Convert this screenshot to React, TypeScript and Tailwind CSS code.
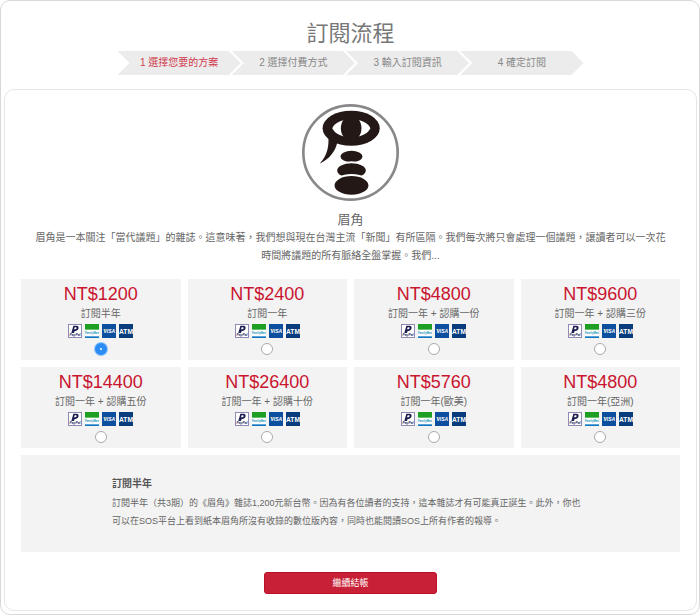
import { useState } from "react";

const FONT = "font-['Liberation_Sans','Noto_Sans_CJK_TC',sans-serif]";

const STEPS = ["1 選擇您要的方案", "2 選擇付費方式", "3 輸入訂閱資訊", "4 確定訂閱"];

const PLANS = [
  { price: "NT$1200", name: "訂閱半年" },
  { price: "NT$2400", name: "訂閱一年" },
  { price: "NT$4800", name: "訂閱一年 + 認購一份" },
  { price: "NT$9600", name: "訂閱一年 + 認購三份" },
  { price: "NT$14400", name: "訂閱一年 + 認購五份" },
  { price: "NT$26400", name: "訂閱一年 + 認購十份" },
  { price: "NT$5760", name: "訂閱一年(歐美)" },
  { price: "NT$4800", name: "訂閱一年(亞洲)" },
];

function Logo() {
  return (
    <svg className="mx-auto size-[97px]" viewBox="36 25 292 292" aria-hidden="true">
      <circle cx="182" cy="171" r="142" fill="#fff" stroke="#888" strokeWidth="8" />
      <g fill="#231815">
        <ellipse cx="184" cy="98" rx="86" ry="53" />
        <path d="M115 120C118 150 113 180 89 205C120 190 136 168 142 142Z" />
        <ellipse cx="185" cy="183" rx="33" ry="17" />
        <ellipse cx="185" cy="225" rx="46" ry="25" stroke="#fff" strokeWidth="6" />
        <ellipse cx="185" cy="270" rx="54" ry="31" stroke="#fff" strokeWidth="6" />
      </g>
      <path d="M127 98C143 62 226 62 242 98C226 134 143 134 127 98Z" fill="#fff" />
      <ellipse cx="184" cy="98" rx="31" ry="38" fill="#231815" />
    </svg>
  );
}

function PaymentIcons() {
  return (
    <span className="mt-px flex gap-[3px]">
      <svg className="size-3.5" viewBox="0 0 42 42" aria-hidden="true">
        <rect x="1.5" y="1.5" width="39" height="39" fill="#fff" stroke="#8f89b5" strokeWidth="3" />
        <path d="M16 5H25C32 5 33 10 31 15C29 20 25 21 20 21L18 27H10Z" fill="#1d1d50" />
        <path d="M20 10H24C27 10 26 16 22 16H18Z" fill="#fff" />
        <text x="21" y="37" textAnchor="middle" fontSize="10" fontWeight="700" fontStyle="italic" fill="#25225c">PayPal</text>
      </svg>
      <svg className="size-3.5" viewBox="0 0 42 42" aria-hidden="true">
        <rect width="42" height="42" fill="#fff" />
        <rect width="42" height="17" fill="#1c9f22" />
        <text x="21" y="31" textAnchor="middle" fontSize="8" fontWeight="700" fill="#1594b8">FamilyMart</text>
        <rect y="37" width="42" height="5" fill="#1177c2" />
      </svg>
      <svg className="size-3.5" viewBox="0 0 42 42" aria-hidden="true">
        <rect width="42" height="42" fill="#0b4f9e" />
        <path d="M3 15H10L11 21Z" fill="#f5a936" />
        <text x="22" y="27" textAnchor="middle" fontSize="15" fontWeight="700" fontStyle="italic" fill="#fff">VISA</text>
      </svg>
      <svg className="size-3.5" viewBox="0 0 42 42" aria-hidden="true">
        <rect width="42" height="42" fill="#083c7c" />
        <text x="21" y="29" textAnchor="middle" fontSize="20" fontWeight="700" fill="#fff">ATM</text>
      </svg>
    </span>
  );
}

export default function App() {
  const [selected, setSelected] = useState(0);
  return (
    <div lang="zh-Hant" className={`${FONT} rounded-[10px] border border-[#d9d9d9] bg-white pt-4 pr-0.5 pb-[3px] pl-[3px] text-center text-[10px] leading-[18px] text-[#666]`}>
      <h1 className="text-[22px] leading-[34px] font-normal text-[#777]">訂閱流程</h1>
      <ol className="mx-auto flex w-[466px] max-w-full">
        {STEPS.map((step, i) => (
          <li
            key={step}
            aria-current={i === 0 ? "step" : undefined}
            className={`-ml-[9px] flex-auto basis-[123px] bg-[#ececec] leading-6 first:ml-0 [clip-path:polygon(0_0,calc(100%-12px)_0,100%_50%,calc(100%-12px)_100%,0_100%,12px_50%)] ${i === 0 ? "text-[#d0394b]" : "text-[#888]"}`}
          >
            {step}
          </li>
        ))}
      </ol>

      <main className="mt-3.5 rounded-[10px] border border-[#e6e6e6] px-4 pt-3.5 pb-4">
        <Logo />
        <h2 className="mt-2.5 text-[13px] leading-[18px]">眉角</h2>
        <p>
          眉角是一本關注「當代議題」的雜誌。這意味著，我們想與現在台灣主流「新聞」有所區隔。我們每次將只會處理一個議題，讓讀者可以一次花
          <br />
          時間將議題的所有脈絡全盤掌握。我們...
        </p>

        <div role="radiogroup" aria-label="訂閱流程" className="mt-3.5 grid grid-cols-4 gap-[7px]">
          {PLANS.map((plan, i) => (
            <label key={plan.name} className="flex flex-col items-center bg-[#f3f3f3] pt-1 pb-[5px]">
              <span className="text-[18px] leading-[22px] text-[#c9152f]">{plan.price}</span>
              <span>{plan.name}</span>
              <PaymentIcons />
              <input
                type="radio"
                name="plan"
                checked={selected === i}
                onChange={() => setSelected(i)}
                className="mt-[5px] size-3 appearance-none rounded-full border border-[#aaa] bg-white p-0 checked:border-5 checked:border-[#2b8cf5] checked:ring-1 checked:ring-[#8fc3fa]"
              />
            </label>
          ))}
        </div>

        <section className="mt-[7px] bg-[#f3f3f3] px-[91px] py-5 text-left">
          <h3 className="font-bold text-[#555]">訂閱半年</h3>
          <p className="mt-px mb-0.5 text-[9px]">
            訂閱半年（共3期）的《眉角》雜誌1,200元新台幣。因為有各位讀者的支持，這本雜誌才有可能真正誕生。此外，你也可以在SOS平台上看到紙本眉角所沒有收錄的數位版內容，同時也能閱讀SOS上所有作者的報導。
          </p>
        </section>

        <button type="button" className="mx-auto mt-5 block h-[22px] w-1/4 min-w-[173px] rounded-[3px] border border-[#bd0f29] bg-[#c82036] text-[9px] leading-[18px] text-white">
          繼續結帳
        </button>
      </main>
    </div>
  );
}
